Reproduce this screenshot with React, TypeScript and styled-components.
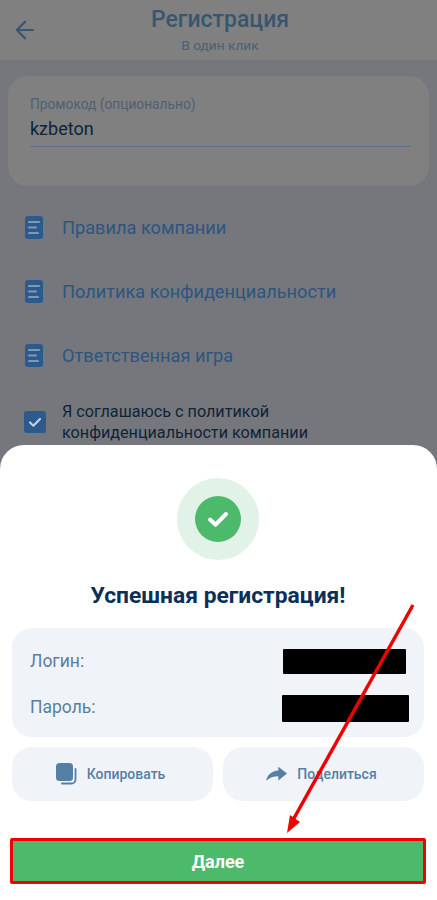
import styled, { createGlobalStyle } from 'styled-components';
import { ArrowLeft } from 'lucide-react';

const GlobalStyle = createGlobalStyle`
  html, body {
    margin: 0;
    padding: 0;
    background: #76777c;
  }
  * {
    box-sizing: border-box;
  }
`;

const DocIcon = () => (
  <DocSvg viewBox="0 0 18 23" aria-hidden="true">
    <rect x="0" y="0" width="18" height="23" rx="3" fill="#2c5a8c" />
    <path d="M4 6h10M4 11.5h7M4 17h9" stroke="#8299b3" strokeWidth="2" strokeLinecap="round" fill="none" />
  </DocSvg>
);

const docs = ['Правила компании', 'Политика конфиденциальности', 'Ответственная игра'];

const App = () => {
  return (
    <Page>
      <GlobalStyle />
      <Header>
        <BackButton>
          <ArrowLeft size={28} strokeWidth={1.9} color="#38566f" />
        </BackButton>
        <Title>Регистрация</Title>
        <Subtitle>В один клик</Subtitle>
      </Header>
      <Content>
        <PromoCard>
          <PromoLabel>Промокод (опционально)</PromoLabel>
          <PromoValue>kzbeton</PromoValue>
        </PromoCard>
        <DocList>
          {docs.map((doc) => (
            <DocRow key={doc}>
              <DocIcon />
              <DocTitle>{doc}</DocTitle>
            </DocRow>
          ))}
        </DocList>
        <AgreeRow>
          <CheckBox viewBox="0 0 22 22" aria-hidden="true">
            <rect width="22" height="22" rx="2.5" fill="#2c5a8c" />
            <path d="M6 11.5l3.4 3.2L16 8" stroke="#c5d2e0" strokeWidth="2.2" strokeLinecap="round" strokeLinejoin="round" fill="none" />
          </CheckBox>
          <AgreeText>Я соглашаюсь с политикой конфиденциальности компании</AgreeText>
        </AgreeRow>
      </Content>

      <Sheet>
        <SuccessRing>
          <SuccessDot>
            <svg width="24" height="20" viewBox="0 0 24 20" aria-hidden="true">
              <path d="M4 10.5l5.6 5.2L20 5" stroke="#fff" strokeWidth="4" strokeLinecap="round" strokeLinejoin="round" fill="none" />
            </svg>
          </SuccessDot>
        </SuccessRing>
        <SheetTitle>Успешная регистрация!</SheetTitle>
        <InfoCard>
          <InfoRow>
            <InfoLabel>Логин:</InfoLabel>
            <Redacted $width={123} $height={25} $right={3} $top={0} />
          </InfoRow>
          <InfoRow>
            <InfoLabel>Пароль:</InfoLabel>
            <Redacted $width={127} $height={27} $right={0} $top={2} />
          </InfoRow>
        </InfoCard>
        <Actions>
          <ActionButton>
            <svg width="21" height="22" viewBox="0 0 21 22" aria-hidden="true">
              <rect x="0" y="0" width="17" height="18" rx="3.5" fill="#5480a6" />
              <path d="M19.5 6v10.5a4 4 0 0 1-4 4H6" stroke="#5480a6" strokeWidth="1.8" strokeLinecap="round" fill="none" />
            </svg>
            Копировать
          </ActionButton>
          <ActionButton>
            <svg width="21" height="16" viewBox="0 0 23 16" aria-hidden="true">
              <path d="M13.5 0L23 7.5L13.5 15V10.5C8 10.5 4 12 0 15.5C1.5 9 6 4.8 13.5 4.2Z" fill="#5480a6" />
            </svg>
            Поделиться
          </ActionButton>
        </Actions>
        <NextButton>Далее</NextButton>
      </Sheet>

      <Annotation viewBox="0 0 437 900" aria-hidden="true">
        <path d="M413 605L293 820" stroke="#f00000" strokeWidth="3.5" fill="none" />
        <path d="M287 833L290 815L300 822Z" fill="#f00000" />
      </Annotation>
    </Page>
  );
};

export default App;

const Page = styled.div`
  position: relative;
  width: 437px;
  height: 900px;
  overflow: hidden;
  background: #76777c;
  font-family: Roboto, 'Liberation Sans', sans-serif;
`;

const Header = styled.header`
  position: relative;
  height: 60px;
  padding: 6px 0 0 3px;
  background: #808080;
  text-align: center;
`;

const BackButton = styled.div`
  position: absolute;
  left: 11px;
  top: 16px;
  display: flex;
`;

const Title = styled.div`
  font-size: 23px;
  line-height: 28px;
  font-weight: 500;
  color: #38566f;
`;

const Subtitle = styled.div`
  margin-top: 3px;
  font-size: 13.7px;
  line-height: 16px;
  color: #4a6076;
`;

const Content = styled.main`
  padding: 16px 8px 0;
`;

const PromoCard = styled.section`
  height: 110px;
  padding: 18px 18px 0 22px;
  border-radius: 20px;
  background: #808080;
`;

const PromoLabel = styled.div`
  font-size: 13.75px;
  line-height: 20px;
  color: #4e6072;
`;

const PromoValue = styled.div`
  height: 33px;
  border-bottom: 1px solid #5f7080;
  font-size: 18px;
  line-height: 30px;
  color: #0f2436;
`;

const DocList = styled.div`
  display: flex;
  flex-direction: column;
  gap: 32px;
  margin-top: 25px;
  padding-left: 17px;
`;

const DocRow = styled.div`
  display: flex;
  align-items: center;
  gap: 19px;
  height: 32px;
`;

const DocSvg = styled.svg`
  width: 18px;
  height: 23px;
  flex-shrink: 0;
`;

const DocTitle = styled.span`
  font-size: 18.2px;
  color: #2d5580;
`;

const AgreeRow = styled.div`
  display: flex;
  align-items: center;
  gap: 16px;
  margin-top: 30px;
  padding-left: 16px;
`;

const CheckBox = styled.svg`
  width: 22px;
  height: 22px;
  flex-shrink: 0;
`;

const AgreeText = styled.div`
  width: 280px;
  font-size: 16.2px;
  line-height: 21px;
  color: #0f2436;
`;

const Sheet = styled.section`
  position: absolute;
  left: 0;
  right: 0;
  top: 445px;
  bottom: 0;
  display: flex;
  flex-direction: column;
  align-items: center;
  padding: 33px 13px 0 12px;
  border-radius: 24px 24px 0 0;
  background: #fff;
`;

const SuccessRing = styled.div`
  display: flex;
  align-items: center;
  justify-content: center;
  width: 82px;
  height: 82px;
  border-radius: 50%;
  background: #e1f2e7;
`;

const SuccessDot = styled.div`
  display: flex;
  align-items: center;
  justify-content: center;
  width: 46px;
  height: 46px;
  border-radius: 50%;
  background: #4cb96b;
`;

const SheetTitle = styled.h2`
  margin: 22px 0 0;
  font-size: 22.8px;
  line-height: 28px;
  font-weight: 700;
  color: #0b2f58;
`;

const InfoCard = styled.div`
  display: flex;
  flex-direction: column;
  gap: 20px;
  width: 100%;
  height: 109px;
  margin-top: 18px;
  padding: 20px 15px 0 18px;
  border-radius: 20px;
  background: #f0f4f8;
`;

const InfoRow = styled.div`
  display: flex;
  align-items: center;
  justify-content: space-between;
  height: 26px;
`;

const InfoLabel = styled.span`
  font-size: 17.5px;
  color: #5a7f9e;
`;

const Redacted = styled.div<{ $width: number; $height: number; $right: number; $top: number }>`
  width: ${(props) => props.$width}px;
  height: ${(props) => props.$height}px;
  margin-top: ${(props) => props.$top}px;
  margin-right: ${(props) => props.$right}px;
  border-radius: 1px;
  background: #000;
`;

const Actions = styled.div`
  display: flex;
  gap: 10px;
  width: 100%;
  margin-top: 10px;
`;

const ActionButton = styled.div`
  display: flex;
  flex: 1;
  align-items: center;
  justify-content: center;
  gap: 10px;
  height: 54px;
  padding-right: 4px;
  border-radius: 20px;
  background: #f0f4f8;
  font-size: 14px;
  font-weight: 500;
  color: #5480a6;
`;

const NextButton = styled.div`
  display: flex;
  flex-shrink: 0;
  align-items: center;
  justify-content: center;
  width: 416px;
  height: 46px;
  margin-top: 37px;
  padding-top: 1px;
  border: 3px solid #f00000;
  border-radius: 2px;
  background: #4cb96b;
  font-size: 18px;
  font-weight: 700;
  color: #fff;
`;

const Annotation = styled.svg`
  position: absolute;
  inset: 0;
  width: 437px;
  height: 900px;
  pointer-events: none;
`;
